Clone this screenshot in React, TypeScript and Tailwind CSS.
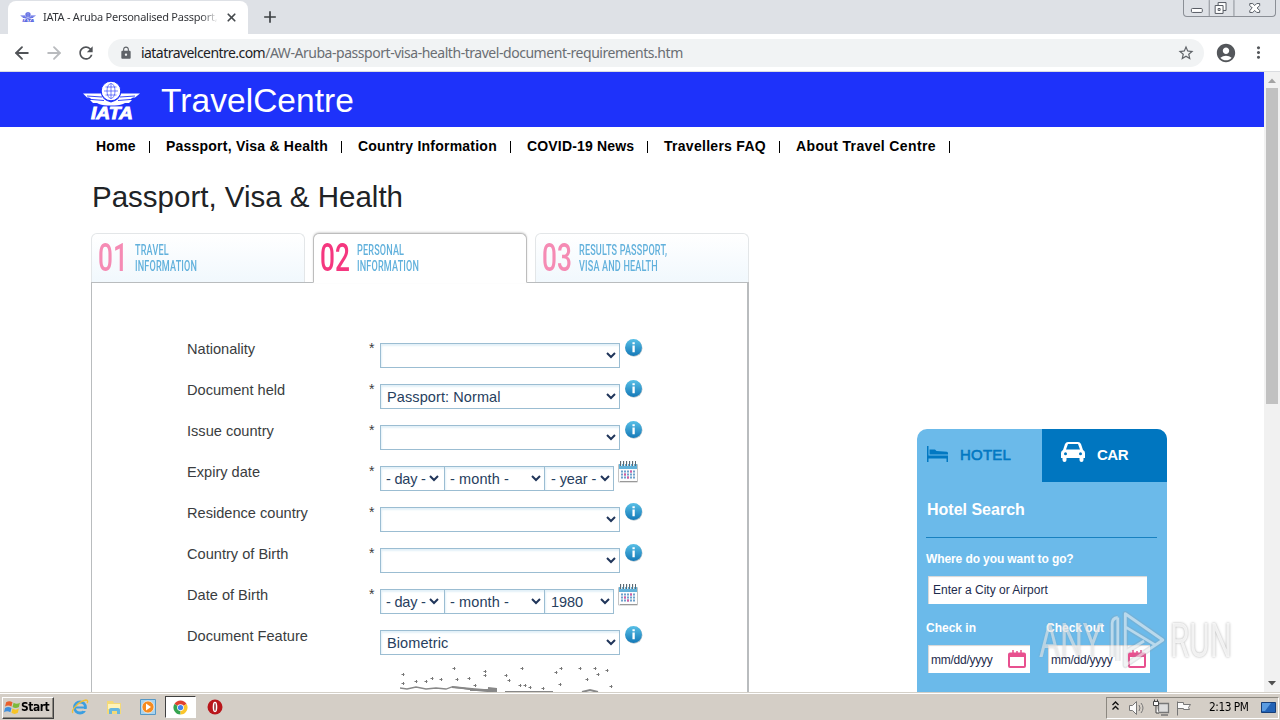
import type { ReactNode } from "react";
import { ArrowLeft, ArrowRight, X } from "lucide-react";
import { MdLock, MdMoreVert, MdRefresh, MdStarBorder, MdAccountCircle, MdAdd } from "react-icons/md";
import { clsx } from "clsx";

const NAV = [
  { label: "Home", box: "w-[54px]", track: "tracking-[0.25px]" },
  { label: "Passport, Visa & Health", box: "w-[176px]", track: "tracking-[0.22px]" },
  { label: "Country Information", box: "w-[153px]", track: "tracking-[0.23px]" },
  { label: "COVID-19 News", box: "w-[121px]", track: "tracking-[0.17px]" },
  { label: "Travellers FAQ", box: "w-[116px]", track: "tracking-[0.28px]" },
  { label: "About Travel Centre", box: "w-[154px]", track: "tracking-[0.36px]" },
];

const STEPS = [
  { num: "01", lines: ["TRAVEL", "INFORMATION"], active: false },
  { num: "02", lines: ["PERSONAL", "INFORMATION"], active: true },
  { num: "03", lines: ["RESULTS PASSPORT,", "VISA AND HEALTH"], active: false },
];

type Field = { label: string; required?: boolean; value?: string; date?: string[] };

const FIELDS: Field[] = [
  { label: "Nationality", required: true },
  { label: "Document held", required: true, value: "Passport: Normal" },
  { label: "Issue country", required: true },
  { label: "Expiry date", required: true, date: ["- day -", "- month -", "- year -"] },
  { label: "Residence country", required: true },
  { label: "Country of Birth", required: true },
  { label: "Date of Birth", required: true, date: ["- day -", "- month -", "1980"] },
  { label: "Document Feature", value: "Biometric" },
];

function IataLogo({ className, fill = "#fff", line = "#1e32fa" }: { className: string; fill?: string; line?: string }) {
  return (
    <svg viewBox="0 0 58 40" className={className}>
      <g fill={fill}>
        <path d="M1 12.500h18c1 4 3 6 6 7.500l4 1.500v3c-5 0-9 0-12-1.500l-2-1h-4l-3-3h3l-4-2.500H5z" />
        <path d="M58 12.500H39c-1 4-3 6-6 7.500l-4 1.500v3c5 0 9 0 12-1.500l2-1h4l3-3h-3l4-2.500h2z" />
        <circle cx="29" cy="10" r="9.8" stroke={line} strokeWidth="1" />
      </g>
      <g fill="none" stroke={line} strokeWidth="0.6">
        <ellipse cx="29" cy="10" rx="4" ry="7.5" />
        <path d="M29 2.500v15M22 10h14M23.500 6h11M23.500 14h11" />
        <path d="M5 15l15 1M10 18.500l12 1M53 15l-15 1M48 18.500l-12 1" strokeWidth="0.9" />
      </g>
      <text x="9" y="38" textLength="42" lengthAdjust="spacingAndGlyphs" fontFamily="Liberation Sans, sans-serif" fontStyle="italic" fontWeight="bold" fontSize="16" fill={fill} stroke={fill} strokeWidth="0.8">
        IATA
      </text>
    </svg>
  );
}

function BrowserTop() {
  return (
    <div>
      <div className="flex h-[34px] bg-[#dee1e6]">
        <div className="mt-px ml-2 flex w-[240px] items-center rounded-t-lg bg-white pl-3">
          <IataLogo className="h-[11px] w-4" fill="#4a58e0" line="#fff" />
          <span className="ml-[7px] w-[175px] overflow-hidden bg-linear-to-r from-[#303236] from-90% to-white bg-clip-text font-['Noto_Sans'] text-[11px] tracking-[-0.25px] whitespace-nowrap text-transparent">
            IATA - Aruba Personalised Passport,
          </span>
          <X className="ml-[7px] h-[13px] w-[13px] text-[#45494d]" strokeWidth={3.2} />
        </div>
        <MdAdd className="mt-[7px] ml-3 h-5 w-5 text-[#3c4043]" />
        <div className="mr-1 ml-auto flex h-[17px] w-[93px] rounded-b border border-t-0 border-[#8b8f96]">
          <svg viewBox="0 0 92 16" className="h-4 w-[92px]" fill="#fff" stroke="#555a62">
            <path d="M25.500 0v16M50.500 0v16" stroke="#8b8f96" />
            <rect x="7.500" y="8.500" width="11" height="4" rx="1" />
            <path d="M34.500 2.500h8v8h-8z" />
            <path d="M31.500 5.500h8v8h-8z" />
            <path d="M34.500 8.500h2v2h-2z" />
            <path d="M66.500 3.500h3l2 2 2-2h3v2l-2.500 2.500 2.500 2.500v2h-3l-2-2-2 2h-3v-2l2.500-2.500-2.500-2.500z" />
          </svg>
        </div>
      </div>
      <div className="flex h-[38px] items-center border-b border-[#dadce0] bg-white">
        <ArrowLeft className="ml-3 h-5 w-5 text-[#505357]" strokeWidth={2.2} />
        <ArrowRight className="ml-3 h-5 w-5 text-[#b9bbbe]" strokeWidth={2.2} />
        <MdRefresh className="ml-3 h-5 w-5 text-[#505357]" />
        <div className="ml-3 flex h-7 w-[1096px] items-center rounded-full bg-[#f1f3f4] pl-[11px] font-['Noto_Sans'] text-[14px]">
          <MdLock className="h-[14px] w-[14px] text-[#5f6368]" />
          <span className="ml-2 tracking-[-0.55px] whitespace-nowrap text-[#202124]">iatatravelcentre.com</span>
          <span className="tracking-[-0.46px] whitespace-nowrap text-[#6a6e73]">
            /AW-Aruba-passport-visa-health-travel-document-requirements.htm
          </span>
          <MdStarBorder className="mr-[9px] ml-auto h-[18px] w-[18px] text-[#5f6368]" />
        </div>
        <MdAccountCircle className="ml-[11px] h-[22px] w-[22px] text-[#54575b]" />
        <MdMoreVert className="ml-3 h-[19px] w-[19px] text-[#54575b]" />
      </div>
    </div>
  );
}

function Step({ num, lines, active }: { num: string; lines: string[]; active: boolean }) {
  return (
    <div
      className={clsx(
        "flex w-[214px] rounded-t-md border font-['Roboto']",
        active
          ? "z-10 -mb-px h-[50px] border-[#bdbdbd] border-b-white bg-white shadow-[0_-1px_2px_#d8d8d8]"
          : "h-[49px] border-[#e3e6e8] border-b-0 bg-linear-to-b from-white to-[#f1f8fd]",
      )}
    >
      <span
        className={clsx(
          "mt-[3px] ml-1.5 w-[37px] origin-left scale-x-[0.69] text-[38px] leading-[42px] font-medium",
          active ? "text-[#f5377f]" : "text-[#f58bb4]",
        )}
      >
        {num}
      </span>
      <div className="mt-[8px] origin-left scale-x-[0.585] text-[15.500px] leading-4 font-medium tracking-[0.3px] whitespace-nowrap text-[#62b1dc]">
        {lines.map((line) => (
          <p key={line}>{line}</p>
        ))}
      </div>
    </div>
  );
}

function Select({ value, className }: { value?: string; className: string }) {
  return (
    <div
      className={clsx(
        "flex h-[25px] items-center justify-between border border-[#9bbdd2] bg-white pr-[3px] text-[14.500px] whitespace-nowrap text-[#27405e] shadow-[inset_1px_2px_2px_#e3f1f8]",
        className,
      )}
    >
      <span className="pt-0.5">{value}</span>
      <svg viewBox="0 0 10 7" className="h-[7px] w-[10px] shrink-0" fill="none" stroke="#20355a" strokeWidth="2">
        <path d="M1 1l4 4 4-4" />
      </svg>
    </div>
  );
}

function InfoIcon() {
  return (
    <svg viewBox="0 0 18 18" className="-mt-px ml-1 h-[19px] w-[19px]">
      <defs>
        <linearGradient id="info" x1="0" y1="0" x2="0" y2="1">
          <stop offset="0" stopColor="#58bfe6" />
          <stop offset="1" stopColor="#1479b8" />
        </linearGradient>
      </defs>
      <circle cx="9.500" cy="9.800" r="8" fill="#bcc8ce" />
      <circle cx="9" cy="9" r="8" fill="url(#info)" />
      <path d="M8 7h2.200v6.500H8zM8 4h2.200v2H8z" fill="#fff" />
    </svg>
  );
}

function CalendarIcon() {
  return (
    <svg viewBox="0 0 20 23" className="-mt-[2px] ml-1 h-[23px] w-5">
      <path d="M.5 4.500h19v17.500H.5z" fill="#fdfdfd" stroke="#c4c4c4" />
      <path d="M1 4h18v5H1z" fill="#62b2da" />
      <path d="M2 21.500h17" stroke="#999" />
      <path d="M2.500 1v5M5.500 1v5M8.500 1v5M11.500 1v5M14.500 1v5M17.500 1v5" stroke="#5d6a72" />
      <path d="M3.500 1v5M6.500 1v5M9.500 1v5M12.500 1v5M15.500 1v5" stroke="#e8eef2" />
      <path d="M3 11.500h14M3 14.500h14M3 17.500h14" stroke="#6da0cc" strokeWidth="2" strokeDasharray="2 1" />
      <path d="M6 14.500h2M9 17.500h2M12 11.500h2" stroke="#d95aa0" strokeWidth="2" />
    </svg>
  );
}

function FormRow({ label, required, value, date }: Field) {
  return (
    <div className="flex h-[41px] items-start text-[#3a3d40]">
      <span className="w-[182px] text-[14.600px] leading-5 whitespace-nowrap">{label}</span>
      <span className="w-[11px] text-[14px] leading-[18px]">{required && "*"}</span>
      {date ? (
        <div className="mt-1 flex">
          <Select value={date[0]} className="w-[65px] pr-[5px] pl-[5px] tracking-[-0.2px]" />
          <Select value={date[1]} className="-ml-px w-[101px] pl-[5px] tracking-[0.1px]" />
          <Select value={date[2]} className="-ml-px w-[70px] pl-[6px] tracking-[-0.1px]" />
        </div>
      ) : (
        <Select value={value} className="mt-1 w-[240px] pl-[6px] tracking-[0.1px]" />
      )}
      {date ? <CalendarIcon /> : <InfoIcon />}
    </div>
  );
}

const SPECKS = [
  [403, 674], [403, 683], [416, 681], [426, 681], [432, 678], [441, 679], [454, 668], [457, 679], [469, 678],
  [475, 685], [485, 671], [485, 675], [506, 675], [509, 680], [520, 685], [525, 685], [530, 687], [522, 668],
  [543, 688], [556, 672], [561, 668], [560, 684], [580, 668], [587, 679], [595, 668], [598, 674], [607, 670], [611, 686],
];

function Captcha() {
  return (
    <svg viewBox="400 666 214 50" className="mt-[-1px] ml-[213px] h-[50px] w-[214px]" fill="none" stroke="#888">
      {SPECKS.map(([x, y]) => (
        <path key={`${x}-${y}`} d={`M${x - 1.5} ${y + 0.5}h3M${x + 0.5} ${y - 1}v3`} stroke="#777" />
      ))}
      <path d="M400 688l7 1 9-2 10 2 10-1 10 1 6-2 10 1 12 2 10 1 11 1" strokeWidth="1.300" />
      <path d="M452 687l20 2 24 2M470 690h26M488 688l8 1v3M505 692h48M582 692l8-2 8 2" strokeWidth="2" />
    </svg>
  );
}

function DateBox() {
  return (
    <div className="flex h-7 w-[102px] items-center justify-between bg-white pr-1 pl-[3px] text-[12px] text-[#1d2b4d] shadow-[inset_1px_1px_1px_#d5d5d5]">
      <span className="pt-0.5 tracking-[-0.25px]">mm/dd/yyyy</span>
      <svg viewBox="0 0 18 18" className="h-[18px] w-[18px]" fill="none" stroke="#e8508f">
        <rect x="1" y="3.500" width="16" height="13.500" rx="1" strokeWidth="2" />
        <path d="M1 5h16" strokeWidth="4" />
        <path d="M5 0v3M9 1v2M13 0v3" strokeWidth="1.500" />
      </svg>
    </div>
  );
}

function HotelWidget() {
  return (
    <aside className="mt-[273px] ml-[168px] h-[292px] w-[250px] overflow-hidden rounded-t-[10px] bg-[#6bbaea]">
      <div className="flex h-[53px] text-[15px] font-bold">
        <div className="flex w-[125px] items-center pl-[10px] text-[#0278c2]">
          <svg viewBox="0 0 21 16" className="-mt-1 h-4 w-[21px]" fill="currentColor">
            <path d="M0 0h1.500v9.500H21V16h-1.500v-3.500h-18V16H0z" />
            <path d="M2.500 3.500h5.500l1.500 1.500 10.500.8q1 .2 1 1.700v1H2.500z" />
          </svg>
          <span className="ml-3 font-medium tracking-[0.2px] [-webkit-text-stroke:0.6px]">HOTEL</span>
        </div>
        <div className="flex flex-1 items-center bg-[#0076c0] pl-[18px] text-white">
          <svg viewBox="0 0 26 22" className="-mt-2 h-[22px] w-[26px]" fill="currentColor">
            <path
              fillRule="evenodd"
              d="M8 1h10q2 0 3 2l2 6q2 1 2 3v5h-1.500v2q0 2-2 2t-2-2v-2h-13v2q0 2-2 2t-2-2v-2H1v-5q0-2 2-3l2-6q1-2 3-2zM8 3L6 8.500h14L18 3zM5.500 11.200a1.500 1.500 0 1 0 0 3 1.500 1.500 0 1 0 0-3zM20.500 11.200a1.500 1.500 0 1 0 0 3 1.500 1.500 0 1 0 0-3z"
            />
          </svg>
          <span className="ml-[11px] tracking-[-0.5px]">CAR</span>
        </div>
      </div>
      <div className="pr-[10px] pl-[9px] text-white">
        <h2 className="mt-4 ml-px text-[16px] leading-6 font-bold">Hotel Search</h2>
        <hr className="mt-[15px] border-[#1881c0]" />
        <p className="mt-[13px] text-[12px] leading-4 font-bold tracking-[-0.1px]">Where do you want to go?</p>
        <div className="mt-[9px] ml-[2px] h-7 w-[219px] bg-white pl-[5px] text-[12px] leading-[29px] text-[#1d2b4d] shadow-[inset_1px_1px_1px_#d5d5d5]">
          Enter a City or Airport
        </div>
        <div className="mt-4 flex text-[12px] leading-4 font-bold">
          <span className="w-[120px]">Check in</span>
          <span>Check out</span>
        </div>
        <div className="mt-[9px] ml-[2px] flex gap-[18px]">
          <DateBox />
          <DateBox />
        </div>
      </div>
    </aside>
  );
}

function Scrollbar() {
  return (
    <div className="flex w-4 flex-col items-center bg-[#f1f1f1]">
      <svg viewBox="0 0 16 16" className="h-4 w-4" fill="#a3a3a3">
        <path d="M4 11l4-4.500 4 4.500z" />
      </svg>
      <div className="h-[316px] w-3 bg-[#c1c1c1]" />
      <svg viewBox="0 0 16 16" className="mt-auto h-4 w-4" fill="#505050">
        <path d="M4 5l4 4.500L12 5z" />
      </svg>
    </div>
  );
}

// Recorder stamp laid over the lower right corner of the page
function Watermark() {
  return (
    <div className="absolute top-[608px] left-[1039px] flex h-[64px] w-[200px] items-center font-['Roboto'] text-[49px] leading-none">
      <span className="w-[70px] origin-left scale-x-[0.66] text-white/50 [text-shadow:0_0_2px_#8886]">ANY</span>
      <svg viewBox="0 0 60 64" className="h-[60px] w-[57px] shrink-0" fill="none" strokeLinejoin="round">
        <g stroke="#909aa2" strokeOpacity="0.25" strokeWidth="6">
          <path d="M3 50V14q0-5 6-6M9 8v46M17 44V4l40 28-40 27V45l20-12M17 18l33 20" />
        </g>
        <g stroke="#fff" strokeOpacity="0.5" strokeWidth="3">
          <path d="M3 50V14q0-5 6-6M9 8v46M17 44V4l40 28-40 27V45l20-12M17 18l33 20" />
        </g>
      </svg>
      <span className="ml-1 w-[66px] origin-left scale-x-[0.64] text-white/80 [text-shadow:0_0_3px_#aaa]">RUN</span>
    </div>
  );
}

function TaskIcon({ children, className }: { children: ReactNode; className?: string }) {
  return (
    <svg viewBox="0 0 18 18" className={clsx("h-[18px] w-[18px]", className)}>
      {children}
    </svg>
  );
}

function Taskbar() {
  return (
    <div className="flex h-7 items-center border-t border-[#d4d0c8] bg-[#d4cec6] font-['DejaVu_Sans'] shadow-[inset_0_1px_0_#fff]">
      <div className="mt-0.5 ml-0.5 flex h-[22px] w-[52px] items-center border border-t-white border-r-[#404040] border-b-[#404040] border-l-white pl-px shadow-[inset_-1px_-1px_0_#8c8880]">
        <svg viewBox="0 0 16 16" className="h-[17px] w-[17px] shrink-0">
          <path d="M2 3q3-2 6 0l-1 4q-3-2-6 0z" fill="#e9602c" />
          <path d="M9 3.500q3 2 6 0l-1 4q-3 2-6 0z" fill="#7dba3a" />
          <path d="M1 8.500q3-2 6 0l-1 4q-3-2-6 0z" fill="#3f8fdd" />
          <path d="M8 9q3 2 6 0l-1 4q-3 2-6 0z" fill="#f7c427" />
        </svg>
        <span className="w-[29px] origin-left scale-x-[0.93] text-[11.500px] font-bold tracking-[-0.5px] text-black">Start</span>
      </div>
      <TaskIcon className="ml-[17px]">
        <circle cx="9" cy="9.500" r="5.500" fill="none" stroke="#3c9fe0" strokeWidth="2.800" />
        <path d="M4 9.500h11" stroke="#3c9fe0" strokeWidth="2" />
        <path d="M12 12h6" stroke="#d4cec6" strokeWidth="2" />
        <path d="M2 15c-3-2 6-12 13-13 2 0 2 2 1 3" fill="none" stroke="#f0bf36" strokeWidth="1.400" />
      </TaskIcon>
      <TaskIcon className="ml-4">
        <path d="M2 3h6l1 2h7v11H2z" fill="#f3d978" />
        <path d="M3 6h12v5H3z" fill="#fff3b8" />
        <path d="M4 16v-4q0-2 2-2h7q2 0 2 2v4h-3v-3H7v3z" fill="#66b6df" />
      </TaskIcon>
      <TaskIcon className="ml-4">
        <path d="M1.500 1.500h15v15h-15z" fill="#a8d3ee" stroke="#5598c6" />
        <circle cx="9" cy="9" r="6" fill="#f58b20" stroke="#fff" strokeWidth="0.600" />
        <path d="M7 5.500l5 3.500-5 3.500z" fill="#fff" />
      </TaskIcon>
      <div className="mt-px ml-2 flex h-[22px] w-[31px] items-center justify-center border border-t-[#404040] border-r-white border-b-white border-l-[#404040] bg-white">
        <svg viewBox="0 0 16 16" className="h-[15px] w-[15px]">
          <path d="M8 8L1.500 4.250A7.500 7.500 0 0 1 14.500 4.250z" fill="#e0412f" />
          <path d="M8 8L1.500 4.250A7.500 7.500 0 0 0 8 15.500z" fill="#35a44f" />
          <path d="M8 8h0L14.500 4.250A7.500 7.500 0 0 1 8 15.500z" fill="#fbc52b" />
          <circle cx="8" cy="8" r="3.600" fill="#fff" />
          <circle cx="8" cy="8" r="2.800" fill="#4383ee" />
        </svg>
      </div>
      <TaskIcon className="ml-[10px]">
        <circle cx="9" cy="9" r="7.500" fill="#b9161b" />
        <ellipse cx="9" cy="9" rx="2.300" ry="5.200" fill="#fff" />
        <ellipse cx="9" cy="9" rx="0.700" ry="4" fill="#7a1014" />
      </TaskIcon>
      <div className="mt-0.5 mr-px ml-auto flex h-[22px] w-[173px] items-center border border-t-[#8c8880] border-r-white border-b-white border-l-[#8c8880]">
        <svg viewBox="0 0 100 20" className="h-5 w-[100px] shrink-0" fill="none" stroke="#111">
          <path d="M5.500 7l3-3 3 3M5.500 11.500l3-3 3 3" strokeWidth="1.400" />
          <g stroke="#777" fill="#fafafa">
            <path d="M22.500 7.500h3l4-4v13l-4-4h-3z" />
            <path d="M32 7q2 3 0 6M34 5q4 5 0 10" fill="none" />
            <path d="M51.500 5.500h10v9h-10zM54 17h7" fill="#ddd" strokeWidth="1.300" />
            <path d="M46.500 3.500h5v4h-5zM47.500 1.500v2M50.500 1.500v2M49 8v7h3" stroke="#444" />
            <path d="M70.500 3.500v14M70.500 4.500h6v2h7l-2 3 1 2h-6v-1h-6z" />
          </g>
        </svg>
        <span className="ml-[2px] w-[50px] origin-left scale-x-[0.92] text-[11.500px] tracking-[-0.5px] whitespace-nowrap text-black">
          2:13 PM
        </span>
        <svg viewBox="0 0 15 12" className="ml-0.5 h-3 w-[15px]">
          <path d="M.5.500h14v10H.5z" fill="#2262b5" stroke="#163e78" />
          <path d="M1 1h9L4 9H1z" fill="#5a9be0" />
        </svg>
      </div>
    </div>
  );
}

export default function App() {
  return (
    <div className="relative flex h-[720px] w-[1280px] flex-col overflow-hidden bg-white font-['Liberation_Sans',sans-serif]">
      <BrowserTop />
      <div className="flex h-[620px] overflow-hidden">
        <main className="w-[1264px]">
          <header className="flex h-[55px] items-center bg-[#1e32fa] pl-[82px]">
            <IataLogo className="mt-0.5 h-10 w-[58px]" />
            <span className="mt-0.5 ml-[21px] text-[33.500px] leading-10 tracking-[0.05px] text-white">TravelCentre</span>
          </header>
          <nav className="flex pt-[9px] pl-24 text-[14px] leading-5 font-bold text-black">
            {NAV.map((item) => (
              <span key={item.label} className={clsx("mr-4 flex items-center justify-between whitespace-nowrap", item.box, item.track)}>
                {item.label}
                <span className="mt-0.5 h-3 w-px bg-black" />
              </span>
            ))}
          </nav>
          <div className="flex">
            <section className="ml-[91px] w-[658px]">
              <h1 className="mt-[21px] ml-px h-[40px] text-[29.500px] leading-[40px] whitespace-nowrap text-[#202326]">
                Passport, Visa &amp; Health
              </h1>
              <div className="mt-4 flex items-start justify-between">
                {STEPS.map((step) => (
                  <Step key={step.num} {...step} />
                ))}
              </div>
              <div className="h-[460px] border border-r-2 border-[#b9bcbe] pt-14 pl-[95px]">
                {FIELDS.map((field) => (
                  <FormRow key={field.label} {...field} />
                ))}
                <Captcha />
              </div>
            </section>
            <HotelWidget />
          </div>
        </main>
        <Scrollbar />
      </div>
      <Taskbar />
      <Watermark />
    </div>
  );
}
